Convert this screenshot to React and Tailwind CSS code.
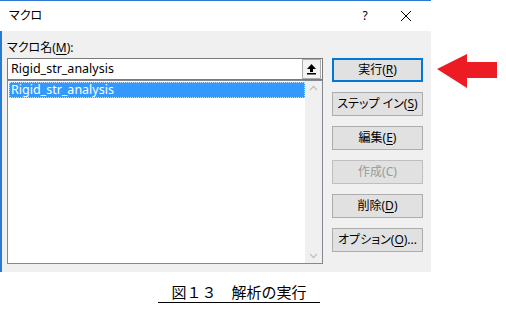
import React from "react";

const ui = { fontFamily: '"Noto Sans", "Noto Sans CJK JP", sans-serif' };

function Btn({ children, primary, disabled }) {
  let cls =
    "h-[24px] w-[91px] flex items-center justify-center text-[12px] leading-none [font-feature-settings:'palt'] ";
  if (primary) cls += "border-2 border-[#0078d7] bg-[#e1e1e1] text-black";
  else if (disabled) cls += "border border-[#bfbfbf] bg-[#e1e1e1] text-[#9a9a9a]";
  else cls += "border border-[#adadad] bg-[#e1e1e1] text-black";
  return <div className={cls}>{children}</div>;
}

function U({ children }) {
  return <span className="underline underline-offset-2">{children}</span>;
}

export default function App() {
  return (
    <div className="w-[506px] h-[312px] bg-white overflow-hidden" style={ui}>
      <div className="flex">
        <div className="w-[431px] h-[272px] flex flex-col">
          <div className="h-[31px] bg-white border-t border-[#2b79d0] flex items-center pl-[9px] text-[12px] text-black [font-feature-settings:'palt']">
            <span className="flex-1">マクロ</span>
            <span className="w-[20px] text-center mr-[25px] text-[12px]">?</span>
            <svg width="12" height="12" viewBox="0 0 12 12" className="mr-[19px]">
              <path d="M1 1 L11 11 M11 1 L1 11" stroke="#000" strokeWidth="1" fill="none" />
            </svg>
          </div>
          <div className="flex-1 bg-[#f0f0f0] border-l-2 border-[#2b79d0] flex">
            <div className="pl-[5px] w-[321px] flex flex-col">
              <div className="pt-[9px] h-[27px] text-[12px] leading-[16px] text-black [font-feature-settings:'palt']">
                マクロ名(<U>M</U>):
              </div>
              <div className="h-[22px] w-[316px] border border-[#7a7a7a] bg-white flex items-center">
                <span className="flex-1 pl-[3px] text-[12.5px] text-black">Rigid_str_analysis</span>
                <div className="w-[19px] h-[20px] mr-[1px] border border-[#adadad] bg-[#f3f3f3] flex items-center justify-center">
                  <svg width="11" height="12" viewBox="0 0 11 12">
                    <path d="M5.5 1 L10 6 L7 6 L7 9 L4 9 L4 6 L1 6 Z" fill="#000" />
                    <rect x="1" y="10" width="9" height="1.5" fill="#000" />
                  </svg>
                </div>
              </div>
              <div className="h-[184px] w-[316px] border border-[#828790] bg-white flex">
                <div className="flex-1 pt-[1px] pl-[1px]">
                  <div className="h-[16px] bg-[#3399ff] border border-dotted border-[#c8e0ff] flex items-center pl-[1px] text-[12.5px] text-white">
                    Rigid_str_analysis
                  </div>
                </div>
                <div className="w-[17px] bg-[#f0f0f0] flex flex-col justify-between items-center py-[4px]">
                  <svg width="9" height="6" viewBox="0 0 9 6">
                    <path d="M1 5 L4.5 1.5 L8 5" stroke="#c0c0c0" strokeWidth="1.3" fill="none" />
                  </svg>
                  <svg width="9" height="6" viewBox="0 0 9 6">
                    <path d="M1 1 L4.5 4.5 L8 1" stroke="#c0c0c0" strokeWidth="1.3" fill="none" />
                  </svg>
                </div>
              </div>
            </div>
            <div className="ml-[9px] pt-[27px] flex flex-col gap-[10px]">
              <Btn primary>実行(<U>R</U>)</Btn>
              <Btn>ステップ イン(<U>S</U>)</Btn>
              <Btn>編集(<U>E</U>)</Btn>
              <Btn disabled>作成(C)</Btn>
              <Btn>削除(<U>D</U>)</Btn>
              <Btn>オプション(<U>O</U>)...</Btn>
            </div>
          </div>
        </div>
        <svg width="61" height="35" viewBox="0 0 61 35" className="ml-[6px] mt-[54px]">
          <polygon points="0,15 30,0 30,8 60,8 60,24 30,24 30,34" fill="#ed1c24" />
        </svg>
      </div>
      <div
        className="ml-[158px] mt-[9px] w-[162px] border-b border-black text-center text-[15px] leading-[21px] text-black"
        style={{ fontFamily: '"Noto Sans CJK JP", sans-serif' }}
      >
        図１３　解析の実行
      </div>
    </div>
  );
}
